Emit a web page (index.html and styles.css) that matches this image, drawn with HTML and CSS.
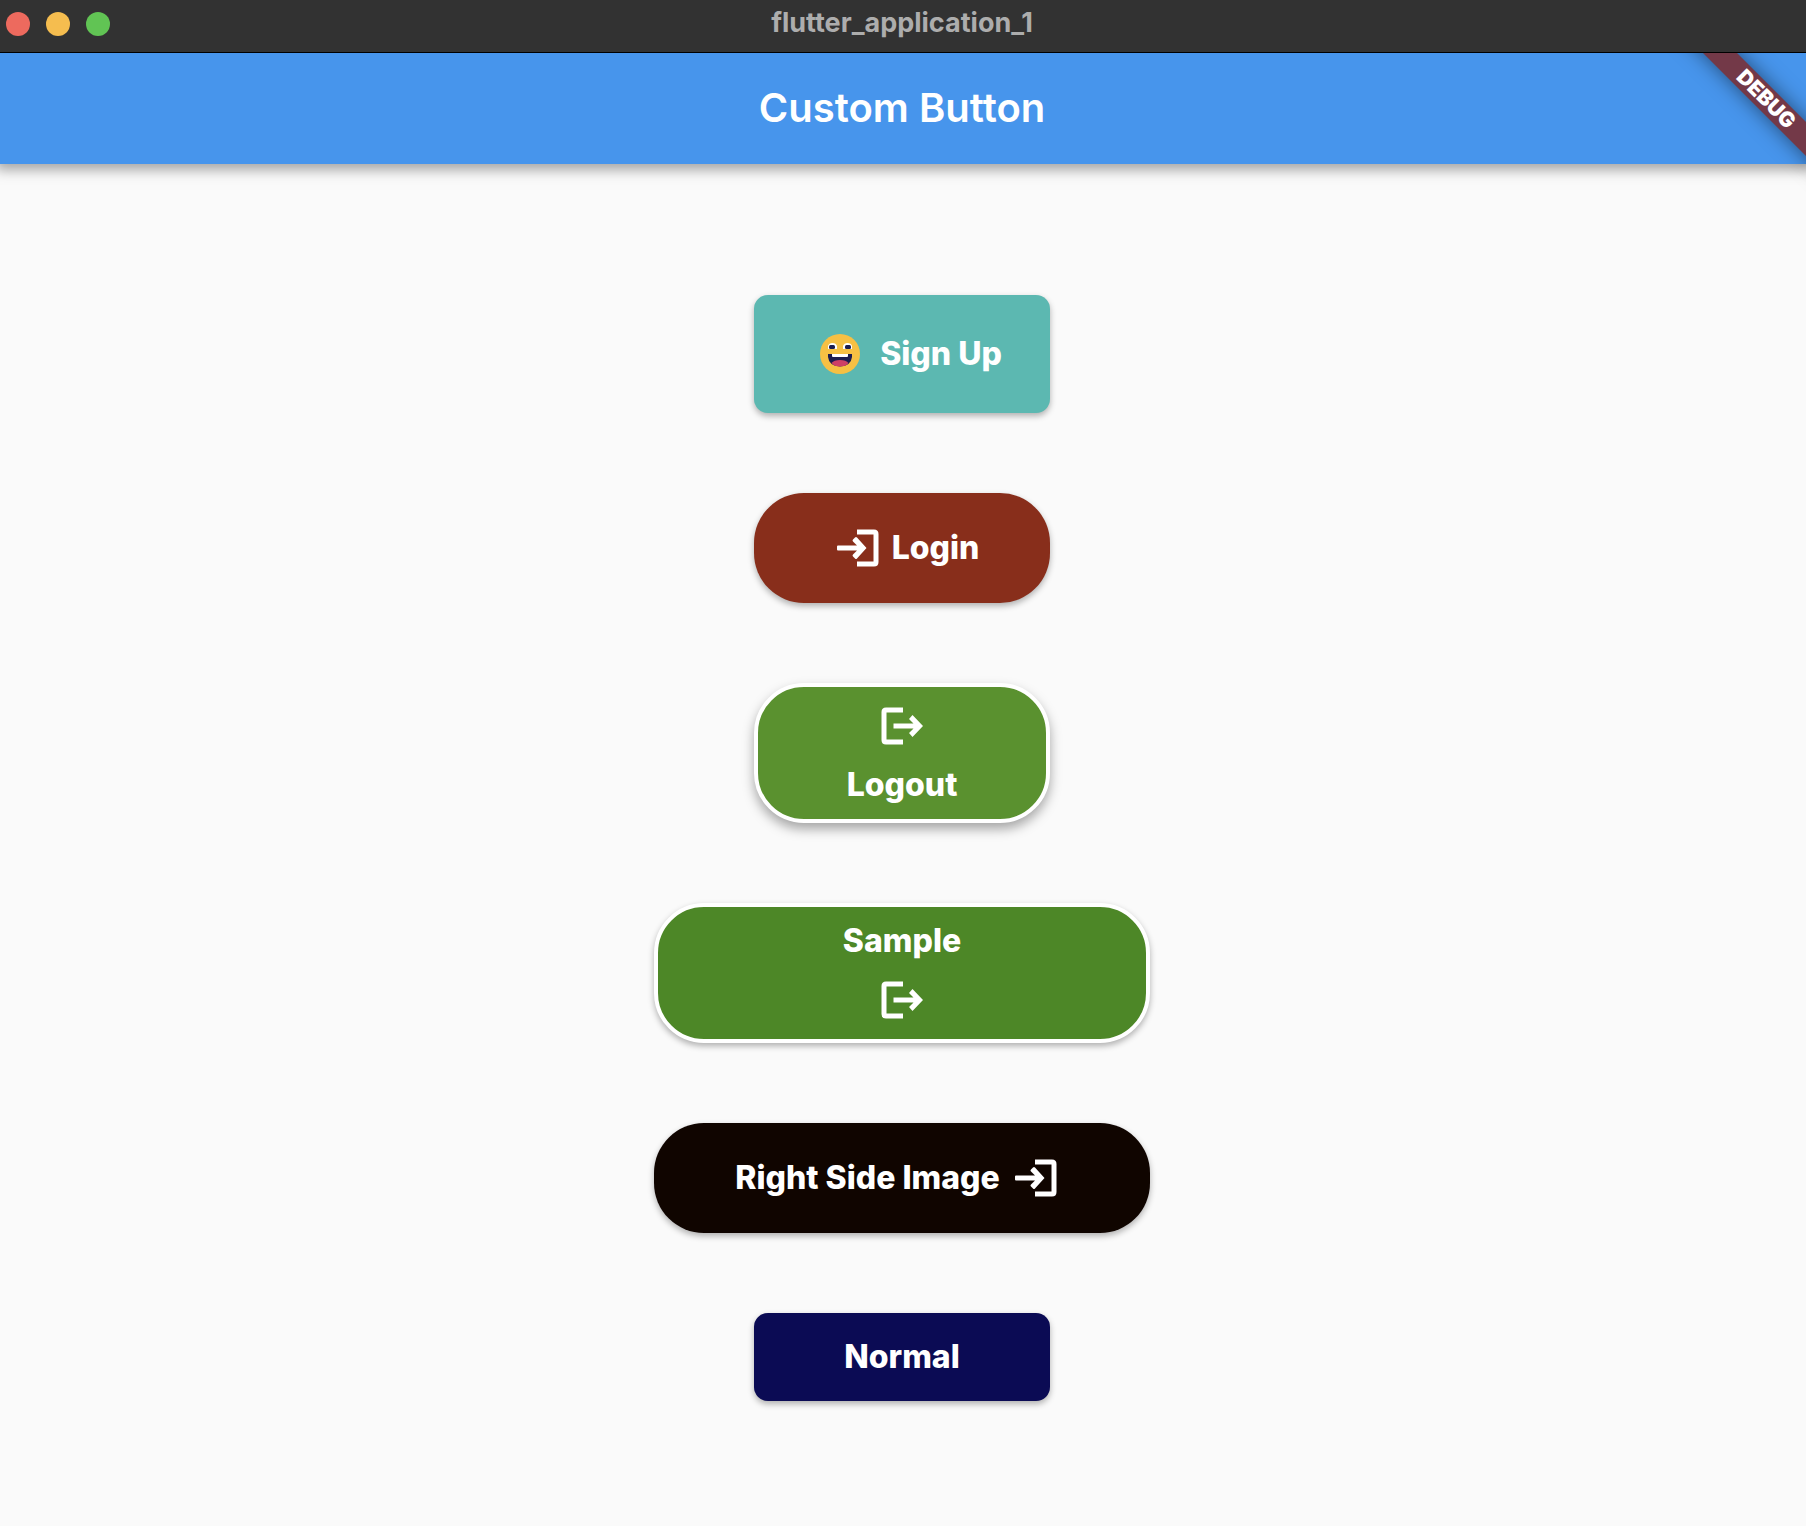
FILE: index.html
```html
<!DOCTYPE html>
<html lang="en">
<head>
<meta charset="utf-8">
<title>flutter_application_1</title>
<link rel="stylesheet" href="styles.css">
</head>
<body>
<svg class="sprite" aria-hidden="true">
  <symbol id="icon-login" viewBox="0 0 42 38">
    <path d="M20 3H37Q39 3 39 5V33Q39 35 37 35H20" fill="none" stroke="currentColor" stroke-width="5"/>
    <path d="M1 16.500H20L16 12.500Q15 11.500 16 10.500L18 8.500Q19 7.500 20 8.500L29.500 19L20 29.500Q19 30.500 18 29.500L16 27.500Q15 26.500 16 25.500L20 21.500H1Q0 21.500 0 20.500V17.500Q0 16.500 1 16.500Z" fill="currentColor"/>
  </symbol>
  <symbol id="icon-logout" viewBox="0 0 42 38">
    <path d="M22 3H5Q3 3 3 5V33Q3 35 5 35H22" fill="none" stroke="currentColor" stroke-width="5"/>
    <path d="M12.500 16.500H32.500L28 12L31.500 8L42 19L31.500 30L28 26L32.500 21.500H12.500Z" fill="currentColor"/>
  </symbol>
</svg>
<header class="titlebar">
  <div class="lights">
    <span class="light light-close"></span>
    <span class="light light-minimize"></span>
    <span class="light light-zoom"></span>
  </div>
  <div class="window-title">flutter_application_1</div>
</header>
<div class="app">
  <header class="appbar"><h1 class="appbar-title">Custom Button</h1></header>
  <div class="banner"><span class="banner-ribbon">DEBUG</span></div>
  <main class="buttons">
    <button class="btn btn-signup" type="button">
      <svg class="emoji" viewBox="0 0 40 40" aria-hidden="true">
        <circle cx="20" cy="20" r="20" fill="#f6c044"/>
        <path d="M8 15V12Q9 9 12.500 9Q16 9 17 12V15Z" fill="#fff"/>
        <path d="M23 15V12Q24 9 27.500 9Q31 9 32 12V15Z" fill="#fff"/>
        <rect x="9" y="11" width="6" height="4" rx="1.500" fill="#1b1c50"/>
        <rect x="25" y="11" width="6" height="4" rx="1.500" fill="#1b1c50"/>
        <path d="M8 20H32V23Q31 32 20 32.500Q9 32 8 23Z" fill="#1b1c50"/>
        <path d="M12 20H28V22Q28 23 27 23H13Q12 23 12 22Z" fill="#fff"/>
        <path d="M11.500 29Q14 26 20 26Q26 26 28.500 29Q26 32.500 20 32.500Q14 32.500 11.500 29Z" fill="#cd3f66"/>
      </svg>
      <span>Sign Up</span>
    </button>
    <button class="btn btn-round btn-login" type="button">
      <svg class="icon" aria-hidden="true"><use href="#icon-login"/></svg>
      <span>Login</span>
    </button>
    <button class="btn btn-round btn-stacked btn-logout" type="button">
      <svg class="icon" aria-hidden="true"><use href="#icon-logout"/></svg>
      <span>Logout</span>
    </button>
    <button class="btn btn-round btn-wide btn-stacked btn-sample" type="button">
      <span>Sample</span>
      <svg class="icon" aria-hidden="true"><use href="#icon-logout"/></svg>
    </button>
    <button class="btn btn-round btn-wide btn-right" type="button">
      <span>Right Side Image</span>
      <svg class="icon" aria-hidden="true"><use href="#icon-login"/></svg>
    </button>
    <button class="btn btn-normal" type="button">Normal</button>
  </main>
</div>
</body>
</html>
```
FILE: styles.css
```css
* {
  box-sizing: border-box;
}

body {
  margin: 0;
  min-height: 100vh;
  background: #fafafa;
  font-family: Inter, "Liberation Sans", sans-serif;
}

.sprite {
  display: none;
}

.titlebar {
  position: relative;
  z-index: 1;
  display: grid;
  grid-template-columns: 1fr auto 1fr;
  height: 53px;
  padding: 0 8px 4px 6px;
  align-items: center;
  background: #323232;
  border-bottom: 1px solid #000;
}

.lights {
  display: flex;
  gap: 16px;
}

.light {
  width: 24px;
  height: 24px;
  border-radius: 50%;
}

.light-close { background: #ed6a5e; }
.light-minimize { background: #f5bd4f; }
.light-zoom { background: #61c454; }

.window-title {
  padding-bottom: 2px;
  color: #adadad;
  font-size: 27px;
  font-weight: 700;
  line-height: 32px;
}

.app {
  position: relative;
}

.appbar {
  display: flex;
  align-items: center;
  justify-content: center;
  height: 111px;
  padding: 0 2px 2px 0;
  background: #4795ec;
  box-shadow: 0 2px 12px 4px rgba(0, 0, 0, 0.34);
}

.appbar-title {
  margin: 0;
  color: #fff;
  font-size: 40px;
  font-weight: 600;
  line-height: 48px;
}

.banner {
  position: absolute;
  top: 0;
  right: 0;
  width: 160px;
  height: 160px;
  overflow: hidden;
  pointer-events: none;
}

.banner-ribbon {
  position: absolute;
  top: 32px;
  right: -78px;
  width: 240px;
  height: 24px;
  padding-left: 6px;
  background: #733948;
  box-shadow: 0 0 20px rgba(0, 0, 0, 0.5);
  color: #fff;
  font-size: 21px;
  font-weight: 900;
  line-height: 24px;
  text-align: center;
  transform: rotate(45deg);
}

.buttons {
  display: flex;
  flex-direction: column;
  align-items: center;
  gap: 80px;
  padding: 131px 2px 80px 0;
}

.btn {
  display: flex;
  align-items: center;
  justify-content: center;
  width: 296px;
  min-height: 88px;
  padding: 0;
  border: 0;
  border-radius: 14px;
  box-shadow: 0 3px 6px rgba(0, 0, 0, 0.3);
  color: #fff;
  font-family: inherit;
  font-size: 32px;
  font-weight: 800;
  line-height: 40px;
}

.btn-round {
  min-height: 110px;
  border-radius: 50px;
}

.btn-wide {
  width: 496px;
}

.btn-stacked {
  flex-direction: column;
  gap: 20px;
  min-height: 140px;
  border: 4px solid #fff;
}

.icon {
  width: 42px;
  height: 38px;
}

.emoji {
  width: 40px;
  height: 40px;
}

.btn-signup {
  gap: 20px;
  min-height: 118px;
  padding-left: 18px;
  background: #5cb8b1;
}

.btn-login {
  gap: 13px;
  padding-left: 12px;
  background: #882e1b;
}

.btn-logout {
  padding-top: 6px;
  background: #5a912f;
  box-shadow: 0 6px 12px rgba(0, 0, 0, 0.34);
}

.btn-sample {
  padding-bottom: 6px;
  background: #4d8727;
}

.btn-right {
  gap: 15px;
  padding-right: 12px;
  background: #100500;
}

.btn-normal {
  background: #0b0b54;
}
```
